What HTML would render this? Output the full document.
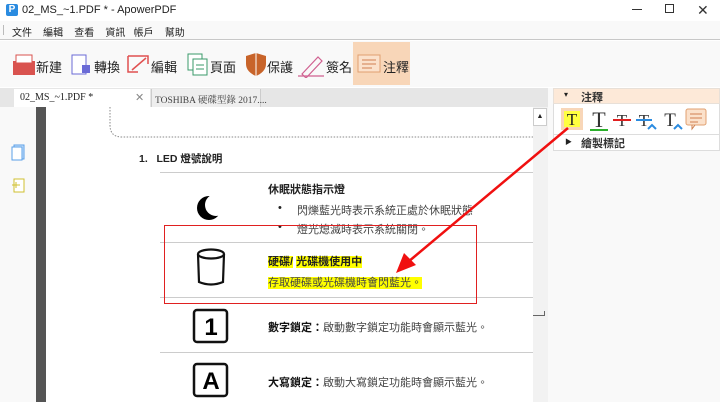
<!DOCTYPE html>
<html><head><meta charset="utf-8"><style>
*{margin:0;padding:0;box-sizing:border-box}
body{width:720px;height:402px;overflow:hidden;background:#fff;font-family:"Liberation Sans","Noto Sans CJK TC",sans-serif;position:relative;color:#222}
.a{position:absolute}
.t{font-size:12px;white-space:nowrap}
.tb{font-size:13px;white-space:nowrap;color:#222}
.d{font-size:11px;white-space:nowrap}
.hl{background:#ffff00}
.line{position:absolute;left:160px;width:373px;height:1px;background:#ccc}
</style></head><body>
<div class="a" style="left:0;top:0;width:720px;height:21px;background:#fff"></div>
<div class="a" style="left:6px;top:4px;width:12px;height:12px;background:#2a8be0;border-radius:2px;color:#fff;font-size:10px;font-weight:bold;text-align:center;line-height:12px">P</div>
<div class="a t" style="left:22px;top:4px;font-size:11px">02_MS_~1.PDF * - ApowerPDF</div>
<div class="a" style="left:632px;top:9px;width:10px;height:1px;background:#333"></div>
<div class="a" style="left:665px;top:4px;width:9px;height:9px;border:1px solid #333"></div>
<div class="a" style="left:697px;top:2px;font-size:14px;color:#333">✕</div>
<div class="a" style="left:0;top:21px;width:720px;height:19px;background:#f9f9f9;border-bottom:1px solid #c8c8c8"></div>
<div class="a" style="left:3px;top:25px;width:1px;height:10px;background:#bbb"></div>
<div class="a d" style="left:12px;top:24px;font-size:10px">文件&nbsp;&nbsp;&nbsp;&nbsp;編輯&nbsp;&nbsp;&nbsp;&nbsp;查看&nbsp;&nbsp;&nbsp;&nbsp;資訊&nbsp;&nbsp;&nbsp;帳戶&nbsp;&nbsp;&nbsp;&nbsp;幫助</div>
<div class="a" style="left:0;top:41px;width:720px;height:46px;background:#f9f9f9"></div>
<div class="a" style="left:353px;top:42px;width:57px;height:43px;background:#f8d6b8"></div>
<svg class="a" style="left:10px;top:52px" width="400" height="26">
<rect x="3" y="9" width="22" height="14" fill="#d9534f"/><rect x="6" y="3" width="16" height="8" fill="#fff" stroke="#d9534f"/>
<rect x="62" y="3" width="14" height="19" fill="#fff" stroke="#6b6bd6"/><rect x="72" y="13" width="8" height="8" fill="#6b6bd6"/>
<path d="M118 4h20v8M118 4v16h10M122 18l14-12" stroke="#e05050" stroke-width="1.5" fill="none"/>
<rect x="178" y="2" width="14" height="16" fill="#fff" stroke="#3a9a6a"/><rect x="183" y="7" width="14" height="16" fill="#fff" stroke="#3a9a6a"/><path d="M186 13h8M186 17h8" stroke="#3a9a6a"/>
<path d="M236 4l10-3 10 3v8c0 6-5 10-10 12c-5-2-10-6-10-12z" fill="#c8642a"/><path d="M246 1v23" stroke="#fff"/>
<path d="M292 22l16-17 4 4-16 17zM288 24h26" stroke="#d06090" fill="none" stroke-width="1.2"/>
<rect x="348" y="3" width="22" height="17" fill="#fbe1cb" stroke="#e0a070"/><path d="M352 8h14M352 12h14M352 16h10" stroke="#d08050"/>
</svg>
<div class="a tb" style="left:36px;top:57px">新建</div>
<div class="a tb" style="left:94px;top:57px">轉換</div>
<div class="a tb" style="left:151px;top:57px">編輯</div>
<div class="a tb" style="left:210px;top:57px">頁面</div>
<div class="a tb" style="left:267px;top:57px">保護</div>
<div class="a tb" style="left:326px;top:57px">簽名</div>
<div class="a tb" style="left:383px;top:57px">注釋</div>
<div class="a" style="left:0;top:88px;width:548px;height:19px;background:#e6e6e6"></div>
<div class="a" style="left:14px;top:89px;width:136px;height:18px;background:#fff"></div>
<div class="a" style="left:20px;top:92px;font-family:'Liberation Serif','Noto Serif CJK SC',serif;font-size:10px">02_MS_~1.PDF *</div>
<div class="a" style="left:135px;top:91px;font-size:11px;color:#888">✕</div>
<div class="a" style="left:151px;top:89px;width:110px;height:18px;background:#eee;border-left:1px solid #ccc;border-right:1px solid #ccc"></div>
<div class="a" style="left:155px;top:92px;font-family:'Liberation Serif','Noto Serif CJK SC',serif;font-size:9.5px;color:#444;white-space:nowrap">TOSHIBA 硬碟型錄 2017....</div>
<div class="a" style="left:0;top:107px;width:36px;height:295px;background:#f9f9f9"></div>
<div class="a" style="left:36px;top:107px;width:10px;height:295px;background:#555"></div>
<svg class="a" style="left:10px;top:143px" width="20" height="52">
<rect x="4" y="2" width="10" height="14" fill="#cfe4fb" stroke="#5aa0e8"/><rect x="2" y="4" width="10" height="13" fill="#fff" stroke="#5aa0e8"/>
<rect x="4" y="36" width="10" height="13" fill="#fff" stroke="#d0c030"/><path d="M2 42h8M6 39v6" stroke="#d0c030"/>
</svg>
<svg class="a" style="left:100px;top:107px" width="434" height="40">
<path d="M10 0v18q0 12 12 12h411" stroke="#888" stroke-dasharray="1.5 1.5" fill="none"/>
</svg>
<div class="a" style="left:139px;top:151px;font-size:10.5px;font-weight:bold;white-space:nowrap">1.&nbsp;&nbsp;&nbsp;LED 燈號說明</div>
<div class="line" style="top:172px"></div>
<div class="line" style="top:242px"></div>
<div class="line" style="top:297px"></div>
<div class="line" style="top:352px"></div>
<svg class="a" style="left:185px;top:190px" width="60" height="212">
<circle cx="24" cy="18" r="12" fill="#000"/><circle cx="31" cy="15" r="11" fill="#fff"/>
<ellipse cx="26" cy="64" rx="13" ry="4.5" fill="none" stroke="#111" stroke-width="2.2"/>
<path d="M13 64l1 28q12 5 24 0l1-28" fill="none" stroke="#111" stroke-width="2.2"/>
<rect x="9" y="120" width="33" height="32" rx="3" fill="none" stroke="#111" stroke-width="2.5"/>
<text x="26" y="145" font-size="24" text-anchor="middle" font-family="Liberation Sans" font-weight="bold">1</text>
<rect x="9" y="174" width="33" height="32" rx="3" fill="none" stroke="#111" stroke-width="2.5"/>
<text x="26" y="199" font-size="24" text-anchor="middle" font-family="Liberation Sans" font-weight="bold">A</text>
</svg>
<div class="a d" style="left:268px;top:181px;font-weight:bold">休眠狀態指示燈</div>
<div class="a d" style="left:278px;top:202px">•</div>
<div class="a d" style="left:297px;top:202px;color:#444">閃爍藍光時表示系統正處於休眠狀態</div>
<div class="a d" style="left:278px;top:221px">•</div>
<div class="a d" style="left:297px;top:221px;color:#444">燈光熄滅時表示系統關閉。</div>
<div class="a d" style="left:268px;top:253px;font-weight:bold"><span class="hl">硬碟/</span> <span class="hl">光碟機使用中</span></div>
<div class="a d" style="left:268px;top:274px;color:#444"><span class="hl">存取硬碟或光碟機時會閃藍光。</span></div>
<div class="a d" style="left:268px;top:319px;color:#444"><b style="color:#111">數字鎖定：</b>啟動數字鎖定功能時會顯示藍光。</div>
<div class="a d" style="left:268px;top:374px;color:#444"><b style="color:#111">大寫鎖定：</b>啟動大寫鎖定功能時會顯示藍光。</div>
<div class="a" style="left:164px;top:225px;width:313px;height:79px;border:1.5px solid #e02020"></div>
<div class="a" style="left:533px;top:107px;width:15px;height:295px;background:#f2f2f2"></div>
<div class="a" style="left:533px;top:108px;width:14px;height:18px;background:#fff;border:1px solid #ccc;font-size:7px;text-align:center;line-height:16px">▲</div>
<div class="a" style="left:533px;top:311px;width:12px;height:5px;border-right:1px solid #666;border-bottom:1px solid #666"></div>
<div class="a" style="left:548px;top:88px;width:172px;height:314px;background:#f9f9f9"></div>
<div class="a" style="left:553px;top:88px;width:167px;height:16px;background:#fde9d8;border:1px solid #e8e0d8"></div>
<div class="a" style="left:564px;top:90px;font-size:8px">▾</div>
<div class="a d" style="left:581px;top:89px;font-weight:bold;color:#333">注釋</div>
<div class="a" style="left:553px;top:104px;width:167px;height:30px;background:#fff;border-left:1px solid #ddd;border-right:1px solid #ddd"></div>
<svg class="a" style="left:560px;top:107px" width="150" height="26">
<rect x="1" y="1" width="22" height="22" fill="#f8d6b8"/><rect x="4" y="4" width="16" height="16" fill="#ffff40"/>
<text x="12" y="18" font-size="17" text-anchor="middle" font-family="Liberation Serif" fill="#222">T</text>
<text x="39" y="20" font-size="22" text-anchor="middle" font-family="Liberation Serif" fill="#333">T</text><rect x="30" y="22" width="18" height="2" fill="#2bb02b"/>
<text x="62" y="19" font-size="17" text-anchor="middle" font-family="Liberation Serif" fill="#333">T</text><rect x="53" y="12" width="18" height="2" fill="#e02020"/>
<text x="84" y="19" font-size="17" text-anchor="middle" font-family="Liberation Serif" fill="#333">T</text><rect x="76" y="12" width="16" height="2" fill="#2a8be0"/><path d="M88 22l4-4 4 4" stroke="#2a8be0" stroke-width="2" fill="none"/>
<text x="110" y="19" font-size="19" text-anchor="middle" font-family="Liberation Serif" fill="#333">T</text><path d="M114 22l4-4 4 4" stroke="#2a8be0" stroke-width="2" fill="none"/>
<rect x="126" y="2" width="20" height="16" rx="2" fill="#fbe1cb" stroke="#e0a070"/><path d="M130 7h12M130 11h12M130 15h8M132 18v4l3-4" stroke="#d08050" fill="none"/>
</svg>
<div class="a" style="left:553px;top:134px;width:167px;height:17px;background:#fff;border:1px solid #ddd"></div>
<div class="a" style="left:565px;top:137px;font-size:7px">▶</div>
<div class="a d" style="left:581px;top:135px;font-weight:bold;color:#333">繪製標記</div>
<svg class="a" style="left:0;top:0" width="720" height="402">
<path d="M568 128L408 262" stroke="#f01010" stroke-width="2.5"/>
<path d="M396 273l8-20 12 12z" fill="#f01010"/>
</svg>
</body></html>
